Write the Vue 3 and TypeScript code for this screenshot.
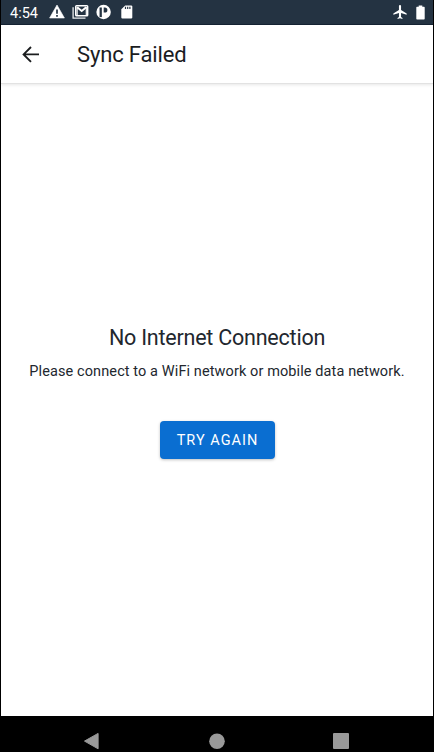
<script setup lang="ts">
const title: string = 'Sync Failed'
const heading: string = 'No Internet Connection'
const message: string = 'Please connect to a WiFi network or mobile data network.'
</script>

<template>
  <div class="device">
    <header class="status">
      <span class="time">4:54</span>
      <div class="notifications">
        <svg width="16" height="16" viewBox="0 0 16 16">
          <path d="M8 1 15.4 14H.6Z" fill="#fff" stroke="#fff" stroke-width=".6" stroke-linejoin="round" />
          <path d="M8 5.4v4.4M8 11v1.8" stroke="#243342" stroke-width="1.7" />
        </svg>
        <svg width="17" height="16" viewBox="0 0 17 16">
          <path d="M1.1 3.2v11H13.5" fill="none" stroke="#e8ebed" stroke-width="1.3" />
          <rect x="3.7" y="1.8" width="12" height="10" rx=".8" fill="none" stroke="#fff" stroke-width="1.4" />
          <path d="M5.2 3.2 9.7 7l4.5-3.8" fill="none" stroke="#fff" stroke-width="1.9" />
          <path d="M5.1 3v8M14.3 3v8" stroke="#fff" stroke-width="1.2" />
        </svg>
        <svg width="16" height="16" viewBox="0 0 16 16">
          <circle cx="7.6" cy="8" r="7.2" fill="#fff" />
          <path d="M4.7 3.5v9.6" stroke="#243342" stroke-width="2.3" />
          <path d="M7.7 3.4h1.1a2.6 2.6 0 0 1 0 5.2H7.7Z" fill="#243342" />
        </svg>
        <svg width="12" height="16" viewBox="0 0 12 16">
          <path d="M4.2 1.4h6a1.1 1.1 0 0 1 1.1 1.1v11a1.1 1.1 0 0 1-1.1 1.1H1.4a1.1 1.1 0 0 1-1.1-1.1V5.3Z" fill="#fff" />
          <path d="M4.5 2.8v2.2M6.7 2.8v2.2M8.9 2.8v2.2" stroke="#243342" stroke-width="1.2" />
        </svg>
      </div>
      <div class="system">
        <svg width="14" height="14" viewBox="2 2 20 20" preserveAspectRatio="none">
          <path d="M21.5 16v-2l-8-5V3.5a1.5 1.5 0 0 0-3 0V9l-8 5v2l8-2.5V19l-2 1.5V22l3.5-1 3.5 1v-1.5l-2-1.5v-5.5Z" fill="#fff" />
        </svg>
        <svg width="9" height="15" viewBox="0 0 9 15">
          <path d="M2.7.5h3.6v1.3H8a.7.7 0 0 1 .7.7v11.3a.7.7 0 0 1-.7.7H1a.7.7 0 0 1-.7-.7V2.5a.7.7 0 0 1 .7-.7h1.7Z" fill="#fff" />
        </svg>
      </div>
    </header>
    <div class="toolbar">
      <button class="back" aria-label="Back">
        <svg width="18" height="18" viewBox="0 0 18 18">
          <path d="M17 9.4H1.6M9 2 1.6 9.4 9 16.8" fill="none" stroke="#1b1d1f" stroke-width="1.9" />
        </svg>
      </button>
      <h1>{{ title }}</h1>
    </div>
    <main>
      <h2>{{ heading }}</h2>
      <p>{{ message }}</p>
      <button class="retry">TRY AGAIN</button>
    </main>
    <nav>
      <svg width="16" height="18" viewBox="0 0 16 18"><path d="M14.1 1.4v15.4L.5 9.1Z" fill="#999" stroke="#999" stroke-linejoin="round" /></svg>
      <svg width="16" height="16" viewBox="0 0 16 16"><circle cx="8" cy="8.2" r="7.8" fill="#999" /></svg>
      <svg width="16" height="16" viewBox="0 0 16 16"><rect width="16" height="16" rx="1" fill="#999" /></svg>
    </nav>
  </div>
</template>

<style>
body {
  background: #000;
  overflow: hidden;
}
</style>

<style scoped>
.device {
  box-sizing: border-box;
  display: flex;
  flex-direction: column;
  width: 434px;
  height: 752px;
  padding: 0 1px;
  background: #000;
  font-family: Roboto, "Liberation Sans", sans-serif;
}
svg {
  display: block;
  flex: none;
}
button {
  margin: 0;
  padding: 0;
  border: 0;
  background: none;
  font-family: inherit;
}
.status {
  box-sizing: border-box;
  display: flex;
  align-items: center;
  height: 25px;
  border-bottom: 1px solid #152333;
  background: #243342;
  color: #fff;
}
.time {
  width: 39px;
  padding-top: 3px;
  padding-left: 9px;
  font-size: 14.5px;
  line-height: 26px;
}
.notifications {
  display: flex;
  gap: 7px;
}
.notifications svg:last-child {
  margin-left: 2px;
}
.system {
  display: flex;
  align-items: center;
  gap: 9px;
  margin-left: auto;
  padding-right: 8px;
}
.toolbar {
  position: relative;
  display: flex;
  align-items: center;
  height: 58px;
  padding-left: 21px;
  background: #fff;
  border-bottom: 1px solid #e2e2e2;
  box-shadow: 0 1px 3px #00000018;
}
h1,
h2,
p {
  margin: 0;
  font-weight: 400;
  white-space: nowrap;
}
h1 {
  margin-left: 37px;
  padding-top: 2px;
  font-size: 22px;
  letter-spacing: -0.15px;
  line-height: 56px;
  color: #1b1d1f;
}
main {
  flex: 1;
  display: flex;
  flex-direction: column;
  align-items: center;
  padding-top: 240px;
  background: #fff;
  color: #22272e;
}
h2 {
  font-size: 21.5px;
  letter-spacing: -0.22px;
  line-height: 28px;
}
p {
  margin-top: 10px;
  font-size: 14.5px;
  letter-spacing: 0.1px;
  line-height: 20px;
}
.retry {
  width: 115px;
  height: 38px;
  margin-top: 39px;
  padding-left: 1px;
  border-radius: 4px;
  background: #0a6ed1;
  box-shadow: 0 1px 3px #00000040;
  color: #fff;
  font-size: 14.5px;
  letter-spacing: 1px;
}
nav {
  box-sizing: border-box;
  display: flex;
  align-items: center;
  justify-content: space-between;
  height: 36px;
  padding: 14px 84px 0 83px;
}
</style>
